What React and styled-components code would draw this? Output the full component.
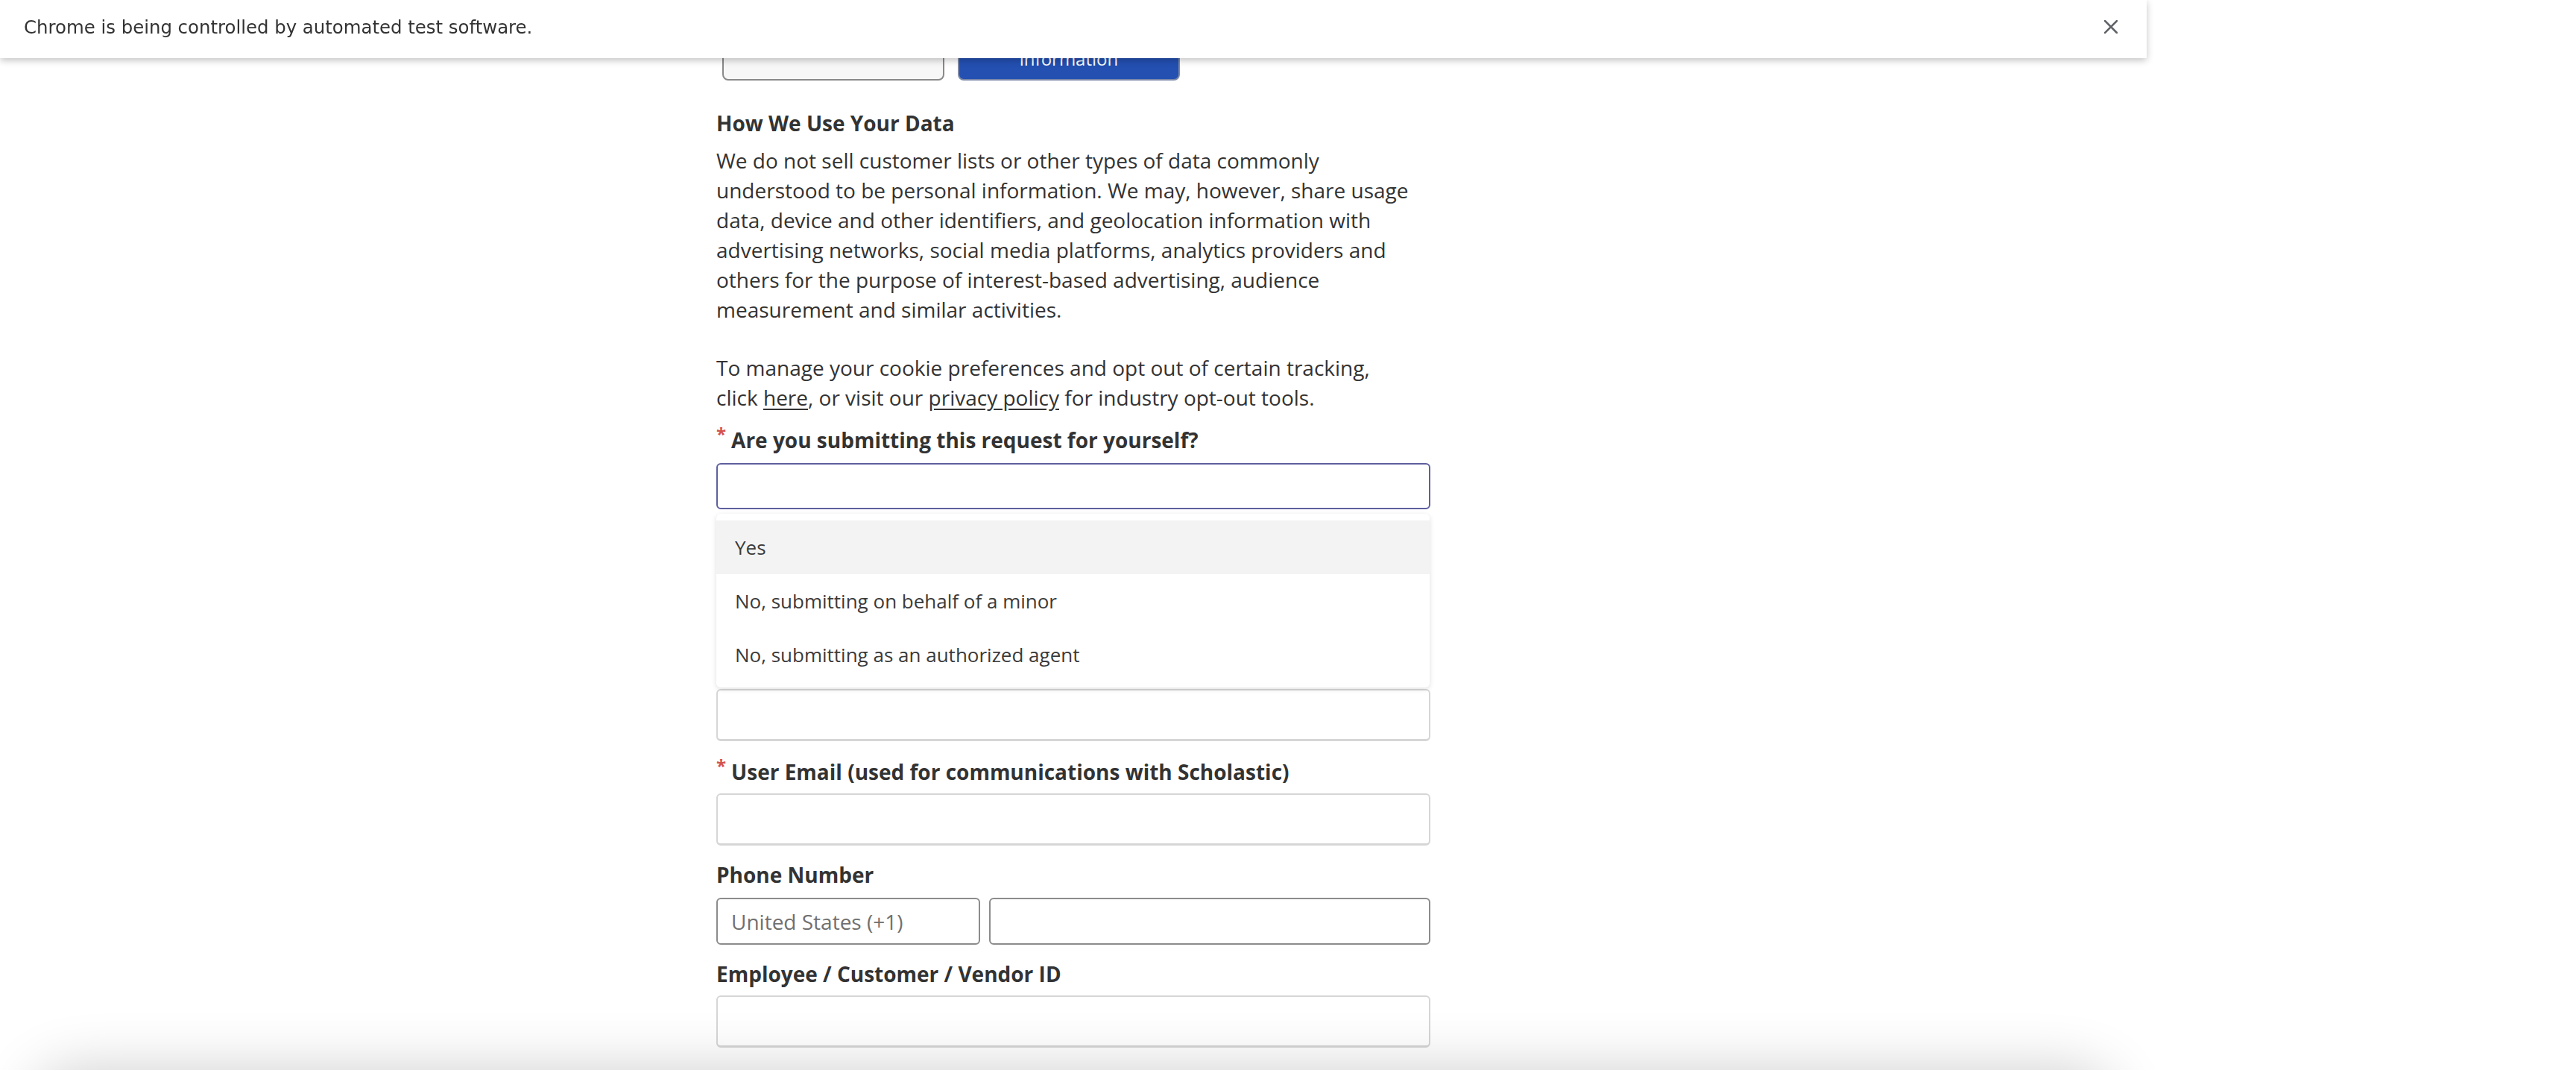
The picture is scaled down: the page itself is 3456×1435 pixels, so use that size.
import React from 'react'
import styled, { createGlobalStyle } from 'styled-components'

const GlobalStyle = createGlobalStyle`
    html, body {
        margin: 0;
        padding: 0;
        background: #fff;
        overflow: hidden;
    }
    body {
        font-family: "Open Sans", "Liberation Sans", sans-serif;
        color: #333;
    }
`

const options = ['Yes', 'No, submitting on behalf of a minor', 'No, submitting as an authorized agent']

const App = () => {
    return (
        <>
            <GlobalStyle />
            <Page>
                <InfoBar>
                    <InfoText>Chrome is being controlled by automated test software.</InfoText>
                    <CloseButton aria-label="Close">
                        <svg width="18" height="18" viewBox="0 0 18 18">
                            <path d="M1 1 L17 17 M17 1 L1 17" stroke="#5f6368" strokeWidth="2.6" strokeLinecap="square" />
                        </svg>
                    </CloseButton>
                </InfoBar>

                <Column>
                    <ButtonRow>
                        <ChoiceButton>Delete my data</ChoiceButton>
                        <ChoiceButton $active>Access my<br />information</ChoiceButton>
                    </ButtonRow>

                    <Heading>How We Use Your Data</Heading>
                    <Paragraph>
                        We do not sell customer lists or other types of data commonly understood to be personal
                        information. We may, however, share usage data, device and other identifiers, and geolocation
                        information with advertising networks, social media platforms, analytics providers and others
                        for the purpose of interest-based advertising, audience measurement and similar activities.
                    </Paragraph>
                    <Paragraph $spaced>
                        To manage your cookie preferences and opt out of certain tracking, click <Link>here</Link>, or
                        visit our <Link>privacy policy</Link> for industry opt-out tools.
                    </Paragraph>

                    <Field $gap={17}>
                        <Label><Required>*</Required>Are you submitting this request for yourself?</Label>
                        <SelectWrap>
                            <SelectBox />
                            <Dropdown>
                                {options.map((opt, i) => (
                                    <Option key={opt} $highlight={i === 0}>{opt}</Option>
                                ))}
                            </Dropdown>
                        </SelectWrap>
                    </Field>

                    {/* field sitting under the open dropdown */}
                    <Field $gap={4}>
                        <Label><Required>*</Required>First Name</Label>
                        <TextInput $top={197} />
                    </Field>

                    <Field $gap={21}>
                        <Label><Required>*</Required>User Email (used for communications with Scholastic)</Label>
                        <TextInput />
                    </Field>

                    <Field $gap={19}>
                        <Label>Phone Number</Label>
                        <PhoneRow>
                            <PhoneBox $country>United States (+1)</PhoneBox>
                            <PhoneBox />
                        </PhoneRow>
                    </Field>

                    <Field $gap={19}>
                        <Label>Employee / Customer / Vendor ID</Label>
                        <TextInput />
                    </Field>
                </Column>

                <BottomShade />
            </Page>
        </>
    )
}

export default App

const Page = styled.div`
    position: relative;
    width: 2880px;
    height: 1435px;
    overflow: hidden;
`

const InfoBar = styled.div`
    position: fixed;
    top: 0;
    left: 0;
    width: 2880px;
    height: 78px;
    box-sizing: border-box;
    padding: 0 39px 6px 32px;
    display: flex;
    align-items: center;
    justify-content: space-between;
    background: #fff;
    box-shadow: 0 3px 9px rgba(0, 0, 0, 0.24);
    z-index: 10;
`

const InfoText = styled.span`
    font-family: "DejaVu Sans", "Liberation Sans", sans-serif;
    font-size: 24.4px;
    color: #333;
`

const CloseButton = styled.button`
    display: flex;
    padding: 0;
    border: none;
    background: none;
`

const Column = styled.div`
    width: 958px;
    margin: 0 auto;
    display: flex;
    flex-direction: column;
`

const ButtonRow = styled.div`
    display: flex;
    gap: 18px;
    padding: 8px 0 0 8px;
`

const ChoiceButton = styled.button`
    width: 298px;
    height: 100px;
    box-sizing: border-box;
    padding: 0 0 ${p => (p.$active ? '10px' : '40px')};
    border: 2px solid ${p => (p.$active ? '#7b88a8' : '#8a8a8a')};
    border-radius: 8px;
    background: ${p => (p.$active ? '#2350b1' : '#f7f7f7')};
    color: ${p => (p.$active ? '#fff' : '#333')};
    font-family: "Open Sans", sans-serif;
    font-size: 24px;
    line-height: 34px;
    display: flex;
    flex-direction: column;
    justify-content: flex-end;
    align-items: center;
`

const Heading = styled.h2`
    margin: 37px 0 10px;
    font-size: 28px;
    line-height: 40px;
    font-weight: 700;
    color: #333;
`

const Paragraph = styled.p`
    max-width: 932px;
    margin: ${p => (p.$spaced ? '38px' : '0')} 0 0;
    font-size: 28px;
    line-height: 40px;
    color: #333;
`

const Link = styled.a`
    color: #333;
    text-decoration: underline;
    text-underline-offset: 4px;
`

const Field = styled.div`
    margin-top: ${p => p.$gap}px;
    display: flex;
    flex-direction: column;
`

const Label = styled.label`
    font-size: 28px;
    line-height: 40px;
    font-weight: 700;
    color: #333;
`

const Required = styled.span`
    color: #d4524c;
    font-size: 24px;
    vertical-align: top;
    line-height: 24px;
    margin-right: 7px;
`

const SelectWrap = styled.div`
    position: relative;
    margin-top: 11px;
`

const SelectBox = styled.div`
    height: 62px;
    box-sizing: border-box;
    border: 2px solid #5e5f9f;
    border-radius: 6px;
    background: #fff;
`

const Dropdown = styled.ul`
    position: absolute;
    top: 68px;
    left: 0;
    right: 1px;
    margin: 0;
    padding: 9px 0 8px;
    list-style: none;
    background: #fff;
    border-radius: 6px;
    box-shadow: 0 2px 7px rgba(0, 0, 0, 0.13);
    z-index: 5;
`

const Option = styled.li`
    height: 72px;
    display: flex;
    align-items: center;
    padding-left: 25px;
    font-size: 26px;
    color: #3b3b3b;
    background: ${p => (p.$highlight ? '#f3f3f3' : '#fff')};
`

const TextInput = styled.div`
    margin-top: ${p => p.$top || 9}px;
    height: 70px;
    box-sizing: border-box;
    border: 2px solid #d6d6d6;
    border-bottom-width: 3px;
    border-radius: 6px;
    background: #fff;
`

const PhoneRow = styled.div`
    margin-top: 11px;
    display: grid;
    grid-template-columns: 354px 1fr;
    gap: 12px;
`

const PhoneBox = styled.div`
    height: 63px;
    box-sizing: border-box;
    border: 2px solid #8c8c8c;
    border-radius: 6px;
    padding-left: 18px;
    display: flex;
    align-items: center;
    font-size: 28px;
    color: #707070;
    background: #fff;
`

const BottomShade = styled.div`
    position: fixed;
    left: 60px;
    width: 2760px;
    top: 1450px;
    height: 200px;
    border-radius: 40px;
    box-shadow: 0 0 80px 14px rgba(0, 0, 0, 0.2);
`
